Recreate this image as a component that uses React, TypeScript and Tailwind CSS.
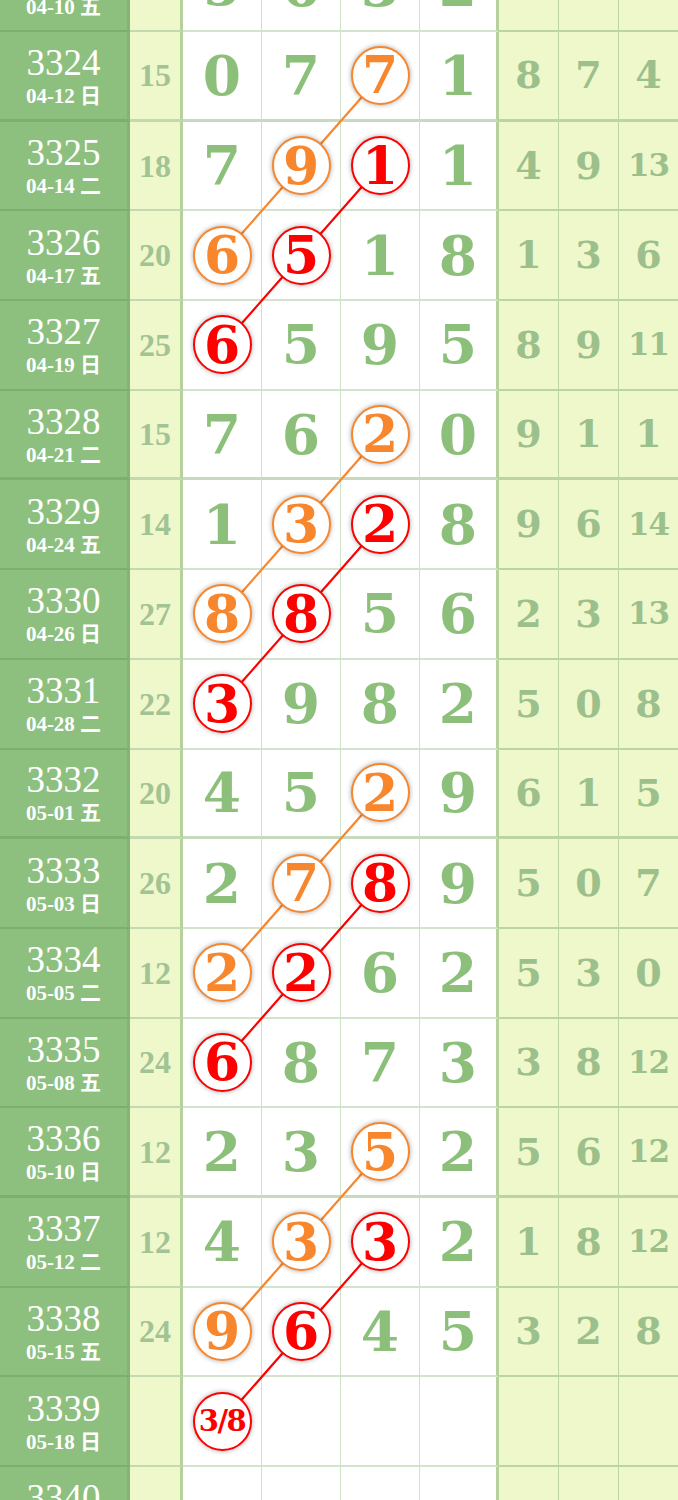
import React from "react";

type Row = {
  no: string;
  date: string;
  sum: string;
  nums: string[];
  tail: string[];
};

// nums: "7" plain, "o7" orange circle, "r1" red circle
const rows: Row[] = [
  { no: "3323", date: "04-10 五", sum: "16", nums: ["5", "6", "3", "2"], tail: ["5", "2", "9"] },
  { no: "3324", date: "04-12 日", sum: "15", nums: ["0", "7", "o7", "1"], tail: ["8", "7", "4"] },
  { no: "3325", date: "04-14 二", sum: "18", nums: ["7", "o9", "r1", "1"], tail: ["4", "9", "13"] },
  { no: "3326", date: "04-17 五", sum: "20", nums: ["o6", "r5", "1", "8"], tail: ["1", "3", "6"] },
  { no: "3327", date: "04-19 日", sum: "25", nums: ["r6", "5", "9", "5"], tail: ["8", "9", "11"] },
  { no: "3328", date: "04-21 二", sum: "15", nums: ["7", "6", "o2", "0"], tail: ["9", "1", "1"] },
  { no: "3329", date: "04-24 五", sum: "14", nums: ["1", "o3", "r2", "8"], tail: ["9", "6", "14"] },
  { no: "3330", date: "04-26 日", sum: "27", nums: ["o8", "r8", "5", "6"], tail: ["2", "3", "13"] },
  { no: "3331", date: "04-28 二", sum: "22", nums: ["r3", "9", "8", "2"], tail: ["5", "0", "8"] },
  { no: "3332", date: "05-01 五", sum: "20", nums: ["4", "5", "o2", "9"], tail: ["6", "1", "5"] },
  { no: "3333", date: "05-03 日", sum: "26", nums: ["2", "o7", "r8", "9"], tail: ["5", "0", "7"] },
  { no: "3334", date: "05-05 二", sum: "12", nums: ["o2", "r2", "6", "2"], tail: ["5", "3", "0"] },
  { no: "3335", date: "05-08 五", sum: "24", nums: ["r6", "8", "7", "3"], tail: ["3", "8", "12"] },
  { no: "3336", date: "05-10 日", sum: "12", nums: ["2", "3", "o5", "2"], tail: ["5", "6", "12"] },
  { no: "3337", date: "05-12 二", sum: "12", nums: ["4", "o3", "r3", "2"], tail: ["1", "8", "12"] },
  { no: "3338", date: "05-15 五", sum: "24", nums: ["o9", "r6", "4", "5"], tail: ["3", "2", "8"] },
  { no: "3339", date: "05-18 日", sum: "", nums: ["r3/8", "", "", ""], tail: ["", "", ""] },
  { no: "3340", date: "05-20 二", sum: "", nums: ["", "", "", ""], tail: ["", "", ""] },
];

const ROW_H = 89.7;
const TOP = -57.7;
const colX = [222, 301, 380];
const ORANGE = "#f7862d";
const RED = "#fe0000";

const Circle = ({ v }: { v: string }) => {
  const orange = v[0] === "o";
  const text = v.slice(1);
  const small = text.length > 1;
  return (
    <div
      className={`relative z-10 w-[59px] h-[59px] rounded-full bg-white border-[2.5px] flex items-center justify-center font-bold leading-none shadow-[0_0_5px_rgba(0,0,0,0.35)] font-['DejaVu_Serif',serif] ${
        orange ? "border-[#f7862d] text-[#f7862d]" : "border-[#fe0000] text-[#fe0000]"
      } ${small ? "text-[29px] tracking-[-1.5px]" : "text-[52px]"}`}
    >
      {text}
    </div>
  );
};

const TableRow = ({ row, thick }: { row: Row; thick: boolean }) => {
  const b = thick ? "border-b-[3px]" : "border-b-2";
  return (
    <div className="grid grid-cols-[130px_53px_79px_79px_79px_79px_60px_60px_59px] h-[89.7px]">
      <div
        className={`bg-[#8dc07f] border-r-[3px] border-r-[#82b574] ${b} border-b-[#7dae6f] flex flex-col items-center justify-center text-white leading-none`}
      >
        <span className="text-[37px]">{row.no}</span>
        <span className="text-[21px] font-bold mt-[5px]">{row.date}</span>
      </div>
      <div
        className={`bg-[#eff8cb] border-r-[3px] border-r-[#b7d19e] ${b} border-b-[#c4d9b0] flex items-center justify-center text-[#a2c393] text-[32px] font-bold leading-none`}
      >
        {row.sum}
      </div>
      {row.nums.map((n, i) => (
        <div
          key={i}
          className={`bg-white ${i === 3 ? "border-r-[3px] border-r-[#b7d19e]" : "border-r-[1.5px] border-r-[#cfe1c8]"} ${b} ${
            thick ? "border-b-[#c6dabd]" : "border-b-[#d3e3cc]"
          } flex items-center justify-center text-[#8cc07a] text-[55px] font-bold leading-none font-['DejaVu_Serif',serif]`}
        >
          {n === "" ? null : n[0] === "o" || n[0] === "r" ? <Circle v={n} /> : n}
        </div>
      ))}
      {row.tail.map((n, i) => (
        <div
          key={i}
          className={`bg-[#eff8cb] ${i < 2 ? "border-r-[1.5px] border-r-[#bcd3a2]" : ""} ${b} border-b-[#bcd3a2] flex items-center justify-center text-[#9cc08c] font-bold leading-none font-['DejaVu_Serif',serif] ${
            n.length > 1 ? "text-[31px] tracking-[-1px]" : "text-[38px]"
          }`}
        >
          {n}
        </div>
      ))}
    </div>
  );
};

const Links = () => {
  const chains: { start: number; color: string }[] = [];
  [1, 5, 9, 13].forEach((s) => chains.push({ start: s, color: ORANGE }));
  [2, 6, 10, 14].forEach((s) => chains.push({ start: s, color: RED }));
  const cy = (i: number) => i * ROW_H + ROW_H / 2;
  return (
    <svg className="absolute left-0 top-0 pointer-events-none" width={678} height={rows.length * ROW_H}>
      {chains.map((c, k) => (
        <polyline
          key={k}
          points={`${colX[2]},${cy(c.start)} ${colX[1]},${cy(c.start + 1)} ${colX[0]},${cy(c.start + 2)}`}
          fill="none"
          stroke={c.color}
          strokeWidth={2.2}
        />
      ))}
    </svg>
  );
};

export default function App() {
  return (
    <div className="w-[678px] h-[1500px] overflow-hidden bg-white font-['Liberation_Serif','Noto_Sans_CJK_SC',serif]">
      <div className="relative" style={{ marginTop: TOP }}>
        {rows.map((r) => (
          <TableRow key={r.no} row={r} thick={(Number(r.no) - 3324) % 4 === 0} />
        ))}
        <Links />
      </div>
    </div>
  );
}
